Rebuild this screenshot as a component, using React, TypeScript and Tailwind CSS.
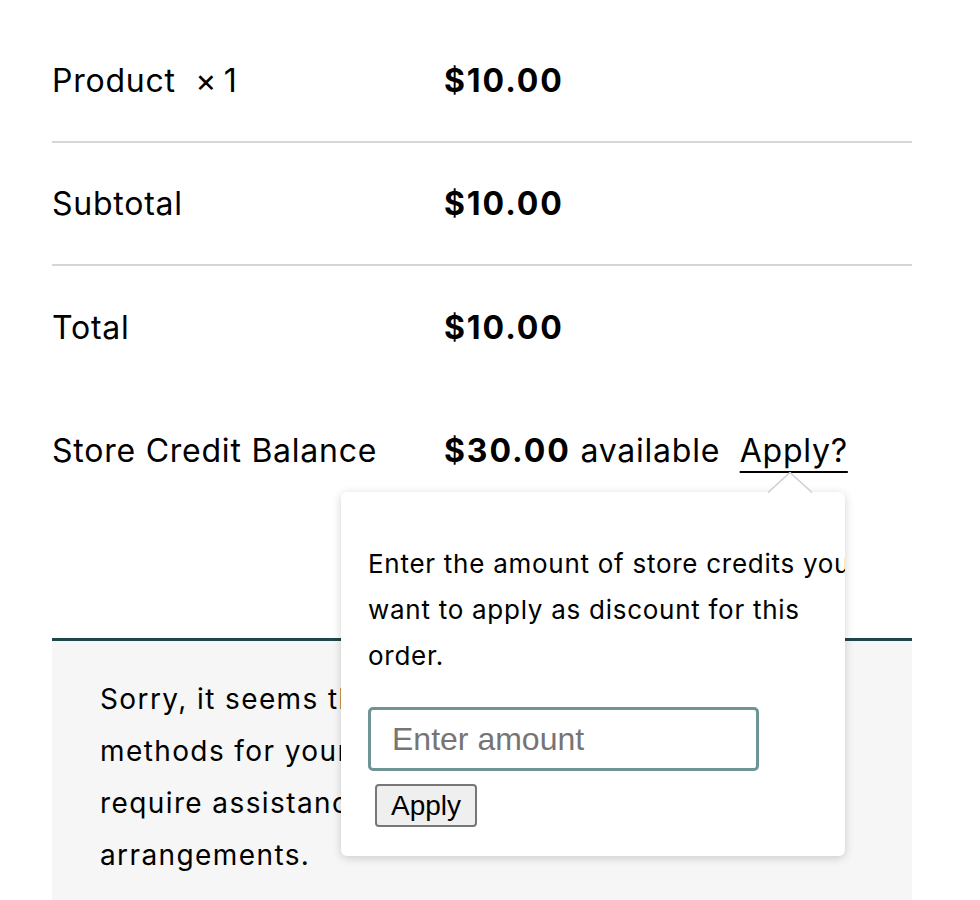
import React from 'react';

const rows = [
  { label: <>Product&nbsp; ×&thinsp;1</>, value: '$10.00', border: true },
  { label: 'Subtotal', value: '$10.00', border: true },
  { label: 'Total', value: '$10.00', border: false },
];

const noticeLines = [
  'Sorry, it seems that there are no available payment',
  'methods for your state. Please contact us if you',
  'require assistance or wish to make alternate',
  'arrangements.',
];

const StoreCreditPopover: React.FC = () => (
  <div className="absolute left-[289px] top-[492px] w-[504px] h-[364px] bg-white rounded-[6px] shadow-[0_2px_10px_rgba(0,0,0,0.18)]">
    {/* caret pointing up at Apply? */}
    <svg className="absolute left-[427px] -top-[20px]" width="44" height="21" viewBox="0 0 44 21">
      <polygon points="0,20.5 22,0.5 44,20.5" fill="#fff" stroke="none" />
      <polyline points="0,20.5 22,0.5 44,20.5" fill="none" stroke="#cfcfcf" strokeWidth="1.5" />
    </svg>
    <div className="h-full overflow-hidden rounded-[6px] pl-[27px] pt-[49px]">
      <p className="w-[515px] text-[26px] leading-[46px] tracking-[0.028em] text-black">
        Enter the amount of store credits you want to apply as discount for this order.
      </p>
      <div className="mt-[28px] font-['Liberation_Sans',Arial,sans-serif] tracking-normal">
        <input
          type="text"
          placeholder="Enter amount"
          className="block w-[391px] h-[64px] border-[3px] border-[#6e9494] rounded-[5px] pl-[21px] text-[32px] text-black placeholder:text-[#757575] outline-none"
        />
        <button className="mt-[13px] ml-[7px] h-[43px] px-[14px] bg-[#efefef] border-2 border-[#777] rounded-[4px] text-[28px] leading-none text-black">
          Apply
        </button>
      </div>
    </div>
  </div>
);

export default function App() {
  return (
    <div className="bg-white h-[900px] overflow-hidden font-['Inter','Noto_Sans',sans-serif] tracking-[0.048em] text-black">
      <div className="relative ml-[52px] w-[860px] pt-[20px]">
        {rows.map((r, i) => (
          <div
            key={i}
            className={`grid grid-cols-[392px_1fr] items-center h-[123px] text-[32px] ${r.border ? 'border-b-2 border-[#d6d6d6]' : ''}`}
          >
            <div>{r.label}</div>
            <div className="font-bold tracking-[0.06em]">{r.value}</div>
          </div>
        ))}
        <div className="grid grid-cols-[392px_1fr] items-center h-[123px] text-[32px]">
          <div>Store Credit Balance</div>
          <div>
            <span className="font-bold tracking-[0.06em]">$30.00</span> available&nbsp;{' '}
            <a className="underline underline-offset-[9px] decoration-2">Apply?</a>
          </div>
        </div>

        <div className="mt-[126px] border-t-[3px] border-[#1d474b] bg-[#f6f6f6] pl-[48px] pt-[32px] pb-[60px]">
          <p className="text-[28px] leading-[52px] tracking-[0.05em]">
            {noticeLines.map((l) => (
              <span key={l} className="block">{l}</span>
            ))}
          </p>
        </div>

        <StoreCreditPopover />
      </div>
    </div>
  );
}
